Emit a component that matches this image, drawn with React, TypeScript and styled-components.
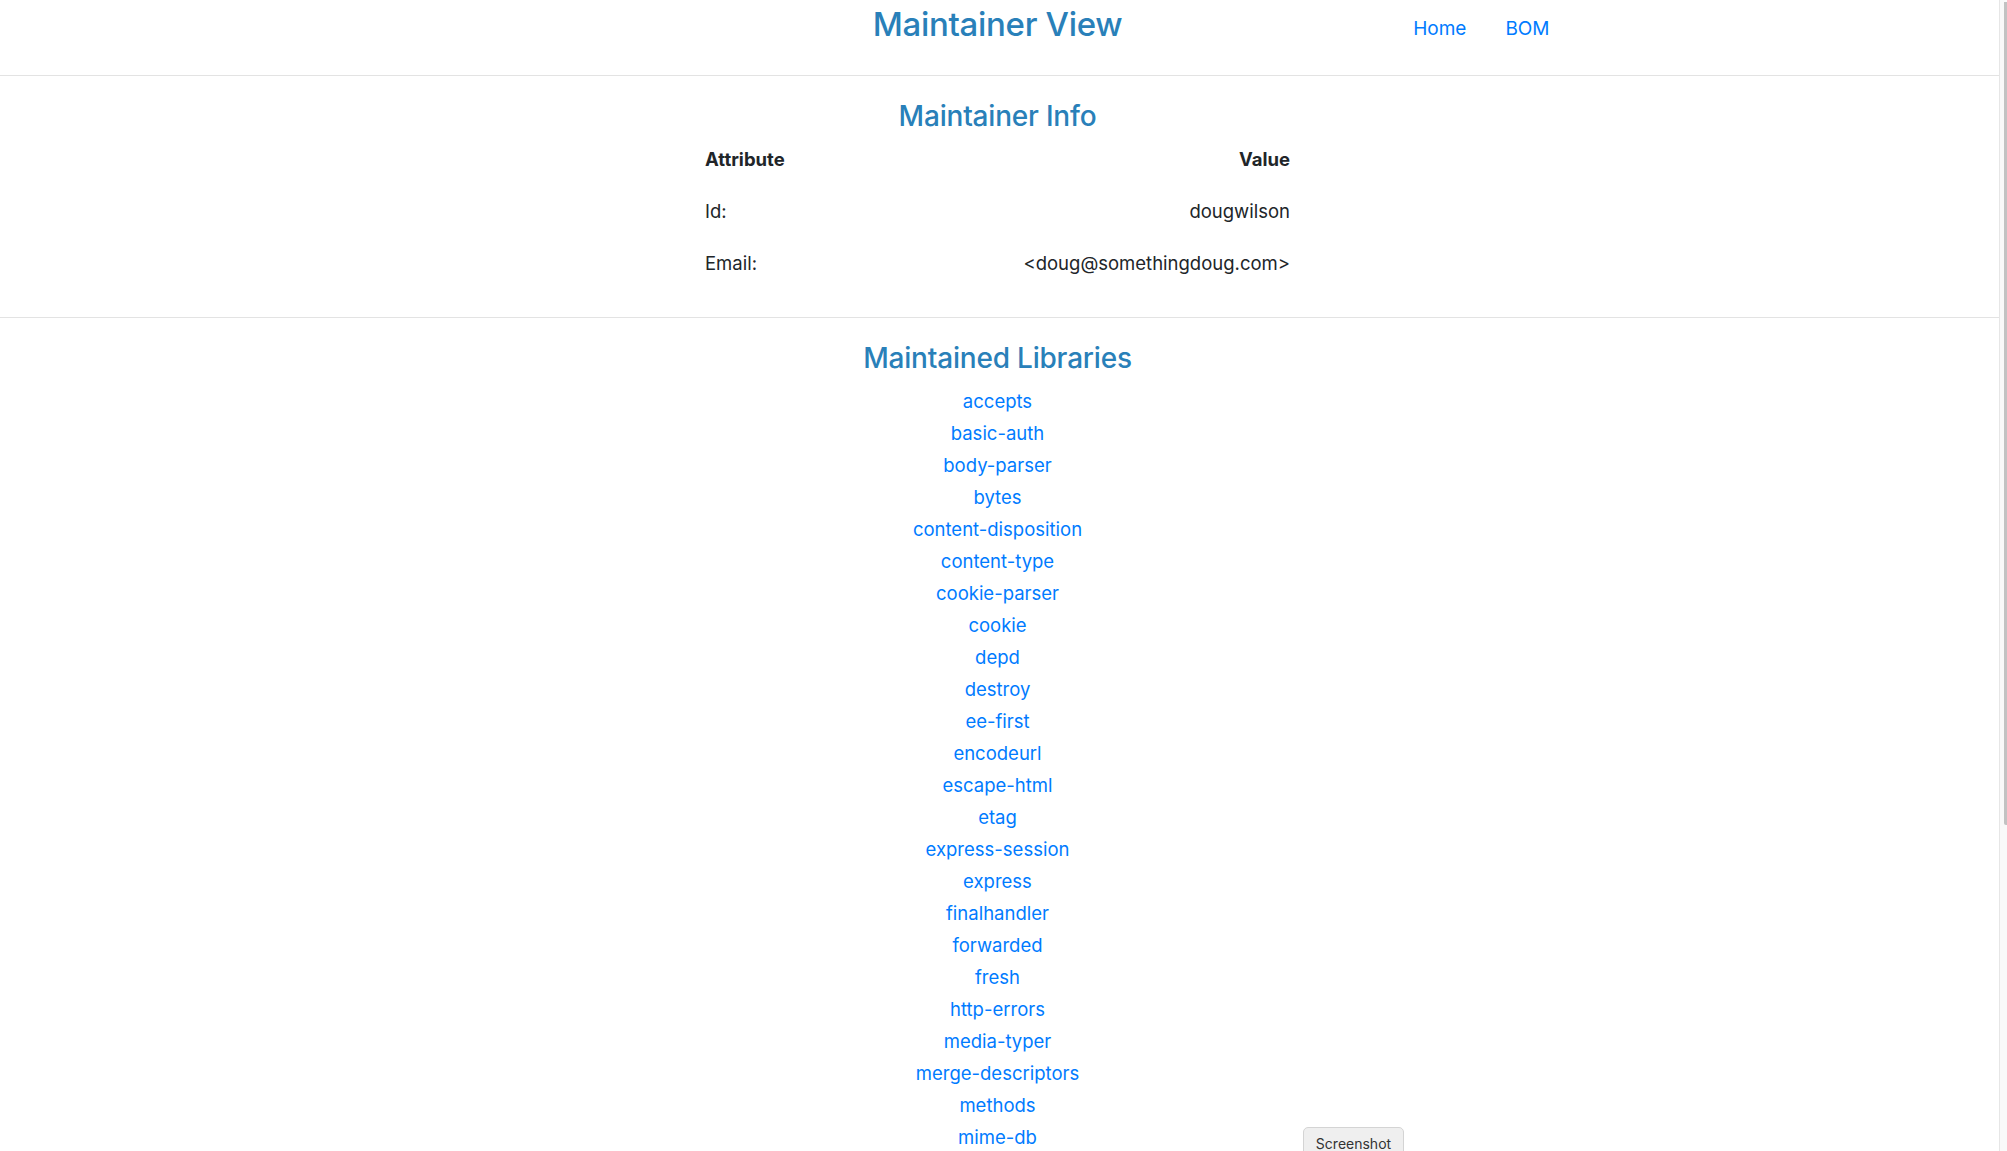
import React from "react";
import styled, { createGlobalStyle } from "styled-components";

const GlobalStyle = createGlobalStyle`
  html, body {
    margin: 0;
    padding: 0;
    background: #ffffff;
  }
  body {
    font-family: "Inter", "Roboto", "Liberation Sans", sans-serif;
    color: #212529;
    font-size: 18.5px;
  }
  ::-webkit-scrollbar {
    width: 0;
    height: 0;
  }
`;

const Page = styled.div`
  width: calc(100% - 8px);
`;

const Header = styled.header`
  height: 75px;
  border-bottom: 1px solid #e3e3e3;
  padding-right: 4px;
`;

const HeaderInner = styled.div`
  max-width: 1104px;
  margin: 0 auto;
  display: grid;
  grid-template-columns: 1fr auto 1fr;
  align-items: start;
`;

const Title = styled.h1`
  grid-column: 2;
  margin: 0;
  padding-top: 1px;
  font-size: 33px;
  line-height: 46px;
  font-weight: 500;
  color: #2980b9;
  letter-spacing: -0.3px;
`;

const Nav = styled.nav`
  grid-column: 3;
  justify-self: end;
  display: flex;
  gap: 39px;
  padding-top: 15px;
`;

const NavLink = styled.a`
  color: #007bff;
  text-decoration: none;
  font-size: 19px;
  line-height: 28px;
`;

const Section = styled.section<{ $bordered?: boolean }>`
  padding: 22px 4px 28px 0;
  border-bottom: ${(p) => (p.$bordered ? "1px solid #e3e3e3" : "none")};
  display: flex;
  flex-direction: column;
  align-items: center;
`;

const SectionTitle = styled.h2`
  margin: 0;
  font-size: 28px;
  line-height: 36px;
  font-weight: 500;
  color: #2980b9;
  letter-spacing: -0.2px;
`;

const InfoTable = styled.table`
  width: 585px;
  margin-top: -1px;
  border-collapse: collapse;
`;

const Cell = styled.td<{ $align?: "left" | "right"; $head?: boolean }>`
  padding: 0;
  height: 52px;
  text-align: ${(p) => p.$align || "left"};
  font-weight: ${(p) => (p.$head ? 700 : 400)};
  font-size: 18.5px;
  color: #212529;
`;

const LibraryList = styled.ul`
  list-style: none;
  margin: 9px 0 0;
  padding: 0;
  display: flex;
  flex-direction: column;
  align-items: center;
`;

const LibraryItem = styled.li`
  height: 32px;
  line-height: 32px;
`;

const LibraryLink = styled.a`
  color: #007bff;
  text-decoration: none;
  font-size: 18.5px;
`;

const ScreenshotButton = styled.button`
  position: fixed;
  left: 1303px;
  top: 1127px;
  width: 101px;
  height: 30px;
  padding: 3px 0 0;
  background: #efefef;
  border: 1px solid #d4d4d4;
  border-radius: 5px;
  font-family: "Inter", "Liberation Sans", sans-serif;
  font-size: 14px;
  color: #333333;
  text-align: center;
  vertical-align: top;
  line-height: 18px;
`;

const ScrollTrack = styled.div`
  position: fixed;
  top: 0;
  right: 0;
  bottom: 0;
  width: 7px;
  background: #f9f9f9;
  border-left: 1px solid #e6e6e6;
`;

const ScrollThumb = styled.div`
  position: absolute;
  top: 2px;
  right: 0;
  width: 3px;
  height: 823px;
  background: #c2c2c2;
  border-bottom-left-radius: 2px;
`;

const libraries = [
  "accepts",
  "basic-auth",
  "body-parser",
  "bytes",
  "content-disposition",
  "content-type",
  "cookie-parser",
  "cookie",
  "depd",
  "destroy",
  "ee-first",
  "encodeurl",
  "escape-html",
  "etag",
  "express-session",
  "express",
  "finalhandler",
  "forwarded",
  "fresh",
  "http-errors",
  "media-typer",
  "merge-descriptors",
  "methods",
  "mime-db",
  "mime-types",
  "negotiator",
  "on-finished",
  "on-headers",
  "parseurl",
  "path-to-regexp",
  "proxy-addr",
  "range-parser",
  "raw-body",
  "send",
  "serve-static",
  "statuses",
  "type-is",
  "vary",
];

export default function App() {
  return (
    <>
      <GlobalStyle />
      <Page>
        <Header>
          <HeaderInner>
            <Title>Maintainer View</Title>
            <Nav>
              <NavLink href="#">Home</NavLink>
              <NavLink href="#">BOM</NavLink>
            </Nav>
          </HeaderInner>
        </Header>
        <Section $bordered>
          <SectionTitle>Maintainer Info</SectionTitle>
          <InfoTable>
            <tbody>
              <tr>
                <Cell $head>Attribute</Cell>
                <Cell $head $align="right">
                  Value
                </Cell>
              </tr>
              <tr>
                <Cell>Id:</Cell>
                <Cell $align="right">dougwilson</Cell>
              </tr>
              <tr>
                <Cell>Email:</Cell>
                <Cell $align="right">&lt;doug@somethingdoug.com&gt;</Cell>
              </tr>
            </tbody>
          </InfoTable>
        </Section>
        <Section>
          <SectionTitle>Maintained Libraries</SectionTitle>
          <LibraryList>
            {libraries.map((lib) => (
              <LibraryItem key={lib}>
                <LibraryLink href="#">{lib}</LibraryLink>
              </LibraryItem>
            ))}
          </LibraryList>
        </Section>
      </Page>
      <ScrollTrack>
        <ScrollThumb />
      </ScrollTrack>
      <ScreenshotButton type="button">Screenshot</ScreenshotButton>
    </>
  );
}
